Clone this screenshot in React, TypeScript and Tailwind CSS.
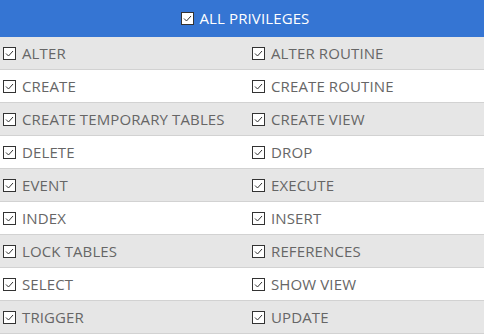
const rows: [string, string][] = [
  ["ALTER", "ALTER ROUTINE"],
  ["CREATE", "CREATE ROUTINE"],
  ["CREATE TEMPORARY TABLES", "CREATE VIEW"],
  ["DELETE", "DROP"],
  ["EVENT", "EXECUTE"],
  ["INDEX", "INSERT"],
  ["LOCK TABLES", "REFERENCES"],
  ["SELECT", "SHOW VIEW"],
  ["TRIGGER", "UPDATE"],
];

function Check() {
  return (
    <span className="inline-flex h-[13px] w-[13px] shrink-0 items-center justify-center border border-[#333] bg-white">
      <svg width="11" height="11" viewBox="0 0 11 11">
        <path d="M2 5.5 L4.5 8 L9 3" fill="none" stroke="#333" strokeWidth="1" />
      </svg>
    </span>
  );
}

function Cell({ label }: { label: string }) {
  return (
    <label className="flex items-center gap-[6px] pl-[3px]">
      <Check />
      <span>{label}</span>
    </label>
  );
}

export default function App() {
  return (
    <div
      className="w-[484px] h-[334px] overflow-hidden bg-white text-[15px] tracking-[0.12px] text-[#666]"
      style={{ fontFamily: '"Open Sans", "Noto Sans", sans-serif' }}
    >
      <div className="flex h-[37px] items-center justify-center gap-[6px] bg-[#3575d3] pl-[6px] text-white">
        <Check />
        <span>ALL PRIVILEGES</span>
      </div>
      {rows.map(([a, b], i) => (
        <div
          key={a}
          className={`grid h-[33px] grid-cols-[249px_1fr] items-center border-b border-[#d2d2d2] ${
            i % 2 === 0 ? "bg-[#e6e6e6]" : "bg-white"
          }`}
        >
          <Cell label={a} />
          <Cell label={b} />
        </div>
      ))}
    </div>
  );
}
